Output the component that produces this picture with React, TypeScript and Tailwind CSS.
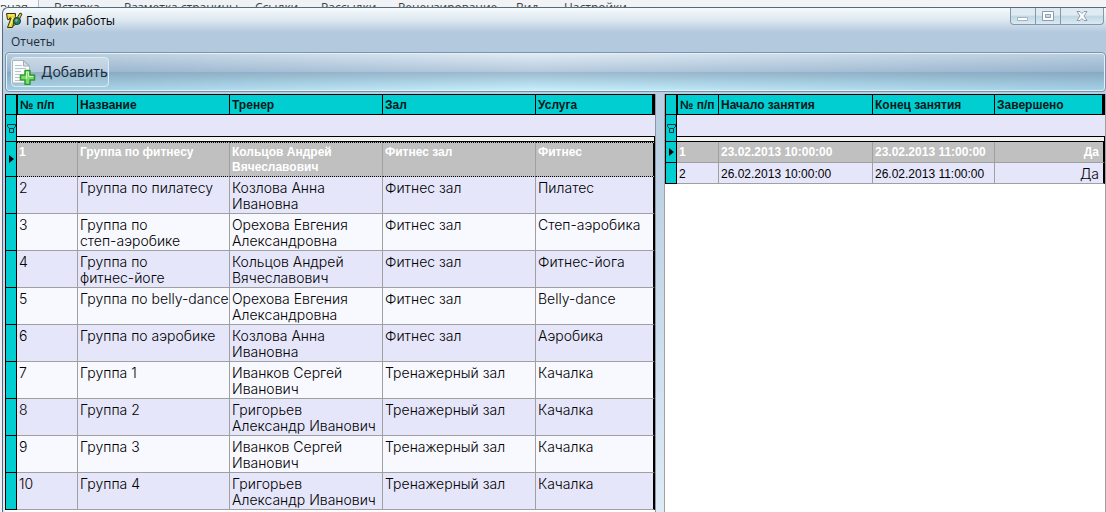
import { useState } from "react";
import clsx from "clsx";

type Group = {
    id: number;
    name: string;
    trainer: string;
    hall: string;
    service: string;
};

type Lesson = {
    id: number;
    start: string;
    end: string;
    done: boolean;
};

const groups: Group[] = [
    { id: 1, name: "Группа по фитнесу", trainer: "Кольцов Андрей\nВячеславович", hall: "Фитнес зал", service: "Фитнес" },
    { id: 2, name: "Группа по пилатесу", trainer: "Козлова Анна\nИвановна", hall: "Фитнес зал", service: "Пилатес" },
    { id: 3, name: "Группа по\nстеп-аэробике", trainer: "Орехова Евгения\nАлександровна", hall: "Фитнес зал", service: "Степ-аэробика" },
    { id: 4, name: "Группа по\nфитнес-йоге", trainer: "Кольцов Андрей\nВячеславович", hall: "Фитнес зал", service: "Фитнес-йога" },
    { id: 5, name: "Группа по belly-dance", trainer: "Орехова Евгения\nАлександровна", hall: "Фитнес зал", service: "Belly-dance" },
    { id: 6, name: "Группа по аэробике", trainer: "Козлова Анна\nИвановна", hall: "Фитнес зал", service: "Аэробика" },
    { id: 7, name: "Группа 1", trainer: "Иванков Сергей\nИванович", hall: "Тренажерный зал", service: "Качалка" },
    { id: 8, name: "Группа 2", trainer: "Григорьев\nАлександр Иванович", hall: "Тренажерный зал", service: "Качалка" },
    { id: 9, name: "Группа 3", trainer: "Иванков Сергей\nИванович", hall: "Тренажерный зал", service: "Качалка" },
    { id: 10, name: "Группа 4", trainer: "Григорьев\nАлександр Иванович", hall: "Тренажерный зал", service: "Качалка" },
];

const lessons: Lesson[] = [
    { id: 1, start: "23.02.2013 10:00:00", end: "23.02.2013 11:00:00", done: true },
    { id: 2, start: "26.02.2013 10:00:00", end: "26.02.2013 11:00:00", done: true },
];

// Ribbon tabs of the window behind, only their tops stick out
const ribbonTabs = [
    { label: "Вставка", width: "w-[70px]" },
    { label: "Разметка страницы", width: "w-[131px]" },
    { label: "Ссылки", width: "w-[66px]" },
    { label: "Рассылки", width: "w-[77px]" },
    { label: "Рецензирование", width: "w-[118px]" },
    { label: "Вид", width: "w-[48px]" },
    { label: "Настройки", width: "w-[80px]" },
];

function AppIcon() {
    return (
        <svg width="17" height="17" viewBox="0 0 17 17" aria-hidden="true">
            <path d="M.5 1.5h9v3l-3 11h-5L5 6H3.5v1.5h-2z" fill="#e3d02a" stroke="#3a3608" />
            <path d="M2 3h6M7 5L4 14" stroke="#fbf59a" fill="none" />
            <path d="M11 6l3-5 2 1-3 6z" fill="#d8cf3a" stroke="#3a3608" />
            <circle cx="11" cy="9" r="3.5" fill="#2f7f6c" stroke="#123c36" />
            <path d="M9 8l2-1 1 1-2 2z" fill="#7fc0a4" />
            <path d="M7 14l3-2" stroke="#3a3608" />
        </svg>
    );
}

function AddPageIcon() {
    return (
        <svg width="24" height="26" viewBox="0 0 24 26" aria-hidden="true">
            <path d="M.5 1.5h11l6 5.5v17H.5z" fill="#fafbfb" stroke="#aab7bf" />
            <path d="M11.5 1.5V7h6z" fill="#d5dde2" stroke="#9fadb5" />
            <path d="M3 6.5h7M3 9.5h11M3 12.5h6M3 15.5h5M3 18.5h5M3 21.5h6" stroke="#b9c2c8" />
            <path d="M13 11.5h5V16h4.5v5H18v4.5h-5V21H8.5v-5H13z" fill="#7fdc6a" stroke="#2c9a33" strokeWidth="1.5" strokeLinejoin="round" />
            <path d="M14.5 20v-7h2v4.5H21" fill="none" stroke="#c9f5bb" />
        </svg>
    );
}

function FilterIcon() {
    return (
        <svg className="mx-auto block" width="9" height="9" viewBox="0 0 9 9" aria-hidden="true">
            <path d="M.5.5h8v2l-2 2h-4l-2-2zM2.5 4.5v4h4v-4" fill="none" stroke="#06393c" />
        </svg>
    );
}

function RowMarker() {
    return (
        <svg className="mx-auto block" width="6" height="8" viewBox="0 0 6 8" aria-hidden="true">
            <path d="M1 0l5 4-5 4z" fill="#000" />
        </svg>
    );
}

type GridProps = {
    label: string;
    headers: string[];
    widths: string[];
    rows: { id: number; cells: string[] }[];
    focused?: boolean;
    compact?: boolean;
};

function DataGrid({ label, headers, widths, rows, focused, compact }: GridProps) {
    const [selected, setSelected] = useState(1);
    const last = headers.length - 1;

    return (
        <table aria-label={label} className="w-full table-fixed border-separate border-spacing-0 border-l border-t border-black text-left">
            <colgroup>
                <col className="w-[11px]" />
                {widths.map((w, i) => (
                    <col key={i} className={w} />
                ))}
            </colgroup>
            <thead>
                <tr className="h-5 bg-[#00ced1] text-[12px] leading-[14px] text-[#06181a]">
                    <td className="border-b border-r border-black p-0" />
                    {headers.map((h, i) => (
                        <th
                            key={h}
                            scope="col"
                            className={clsx(
                                "whitespace-nowrap border-b border-black p-0 pl-[2px] font-bold",
                                i === last ? "border-r-3" : "border-r",
                                i === 0 && "border-l",
                            )}
                        >
                            {h}
                        </th>
                    ))}
                </tr>
                <tr className="h-[22px]">
                    <td rowSpan={2} className="border-b border-r border-black bg-[#00ced1] p-0 align-middle">
                        <FilterIcon />
                    </td>
                    <td colSpan={headers.length} className="border-b border-black bg-[#e6e6fa] p-0" />
                </tr>
                <tr className="h-[5px]">
                    <td colSpan={headers.length} className="border-b border-r border-black bg-[#f4f2f0] p-0" />
                </tr>
            </thead>
            <tbody>
                {rows.map((row, r) => {
                    const active = row.id === selected;
                    return (
                        <tr
                            key={row.id}
                            onClick={() => setSelected(row.id)}
                            className={clsx(
                                active
                                    ? "bg-[#c0c0c0] text-[12px] font-bold leading-[15px] text-white"
                                    : "leading-4 text-black",
                                !active && (compact ? "text-[12px]" : "font-['Inter','Liberation_Sans',sans-serif] text-[14px] font-light"),
                                !active && (r % 2 ? "bg-[#e6e6fa]" : "bg-[#f8f8ff]"),
                                compact ? "h-[21px]" : active ? "h-[35px]" : "h-[37px]",
                            )}
                        >
                            <td className="border-b border-r border-black bg-[#00ced1] p-0 align-middle">
                                {active && <RowMarker />}
                            </td>
                            {row.cells.map((cell, i) => (
                                <td
                                    key={i}
                                    className={clsx(
                                        "whitespace-pre p-0 pl-[2px] align-top",
                                        active && focused
                                            ? "border-y border-r border-y-black pt-[2px] [border-bottom-style:dotted] [border-top-style:dotted]"
                                            : "border-b border-r border-b-[#a0a0a0] pt-[3px]",
                                        i === last ? "border-r-2 border-r-black" : "border-r-[#a0a0a0]",
                                        compact && i === last && "pr-1 text-right",
                                        compact && i === last && !active && "font-['Inter','Liberation_Sans',sans-serif] text-[14px] font-light",
                                    )}
                                >
                                    {cell}
                                </td>
                            ))}
                        </tr>
                    );
                })}
            </tbody>
        </table>
    );
}

export default function App() {
    return (
        <div className="flex min-h-screen flex-col bg-[#eef0f4] font-['Liberation_Sans',Arial,sans-serif]">
            <div className="flex h-[7px] overflow-hidden bg-linear-to-r from-[#eef1f5] to-[#f4f4f6] font-['Open_Sans',sans-serif] text-[12px] leading-4 text-[#444]">
                <span className="w-[39px] shrink-0 border-r border-[#b5bcc6] bg-[#f6f8fa]">вная</span>
                <span className="w-[15px] shrink-0" />
                {ribbonTabs.map((tab) => (
                    <span key={tab.label} className={clsx("shrink-0 whitespace-nowrap", tab.width)}>
                        {tab.label}
                    </span>
                ))}
            </div>

            <main className="ml-[2px] flex flex-1 flex-col rounded-tl-md border-l border-t border-[#536b7c] bg-linear-to-b from-[#b9cfe2] from-25% to-[#deebf7]">
                <header className="flex h-6 items-start justify-between rounded-tl-md bg-linear-to-b from-[#f6fafc] via-[#dde8f0] to-[#b4cade] pl-[3px]">
                    <div className="flex h-6 items-center gap-[3px] pt-px">
                        <AppIcon />
                        <h1 className="font-['Open_Sans',sans-serif] text-[12px] leading-4 text-black">График работы</h1>
                    </div>
                    <div className="mr-[2px] flex h-[17px] overflow-hidden rounded-b border border-t-0 border-[#8398aa] bg-linear-to-b from-[#dfeaf2] from-45% via-[#c0d7e5] via-50% to-[#dce9f2]">
                        <button aria-label="Свернуть" className="flex w-[25px] items-center justify-center border-r border-[#8398aa]">
                            <svg width="12" height="12" viewBox="0 0 12 12">
                                <path d="M.5 7.5h10v3H.5z" fill="#fff" stroke="#a3b3c0" />
                            </svg>
                        </button>
                        <button aria-label="Развернуть" className="flex w-[25px] items-center justify-center border-r border-[#8398aa]">
                            <svg width="12" height="10" viewBox="0 0 12 10">
                                <path d="M.5.5h11v9H.5zM3.5 3.5v3h5v-3z" fill="#fff" stroke="#8b9dac" fillRule="evenodd" />
                            </svg>
                        </button>
                        <button aria-label="Закрыть" className="flex w-[42px] items-center justify-center">
                            <svg width="12" height="10" viewBox="0 0 12 10">
                                <path d="M1 .5h3l2 2 2-2h3L8 5l3 4.5H8l-2-2-2 2H1L4 5z" fill="#fff" stroke="#8b9dac" />
                            </svg>
                        </button>
                    </div>
                </header>

                <nav className="flex h-5 items-center bg-[#b3c9de] pl-2">
                    <button className="font-['Open_Sans',sans-serif] text-[12px] leading-4 text-[#222b33]">Отчеты</button>
                </nav>

                <div className="ml-[2px] flex h-[40px] items-center rounded border border-[#7d92ab] bg-[linear-gradient(90deg,rgba(70,120,160,0.28),transparent_48%,rgba(70,120,160,0.26)),linear-gradient(180deg,#e2ecf5,#b4c9dd_50%,#9dbace_50%,#c6f2ff)] pl-[5px] shadow-[inset_0_0_0_1px_#e4f0f8]">
                    <button className="flex h-[30px] items-center gap-[5px] rounded-sm border border-[#dcebf5] bg-linear-to-b from-white/30 from-50% to-white/10 to-50% font-['Inter','Liberation_Sans',sans-serif] text-[14px] leading-4 text-[#1d2f3f]">
                        <AddPageIcon />
                        Добавить
                    </button>
                </div>

                <div className="ml-[2px] mt-[2px] flex flex-1 gap-2">
                    <section className="min-w-0 flex-[650_1_0%] border-r border-[#8d979f] bg-white">
                        <DataGrid
                            label="Группы"
                            headers={["№ п/п", "Название", "Тренер", "Зал", "Услуга"]}
                            widths={["w-[61px]", "w-[152px]", "w-[153px]", "w-[153px]", "w-auto"]}
                            rows={groups.map((g) => ({ id: g.id, cells: [String(g.id), g.name, g.trainer, g.hall, g.service] }))}
                            focused
                        />
                    </section>
                    <section className="min-w-0 flex-[440_1_0%] border-x border-[#a0a0a0] bg-white">
                        <DataGrid
                            label="Занятия"
                            headers={["№ п/п", "Начало занятия", "Конец занятия", "Завершено"]}
                            widths={["w-[42px]", "w-[154px]", "w-[122px]", "w-auto"]}
                            rows={lessons.map((l) => ({ id: l.id, cells: [String(l.id), l.start, l.end, l.done ? "Да" : "Нет"] }))}
                            compact
                        />
                    </section>
                </div>
            </main>
        </div>
    );
}
